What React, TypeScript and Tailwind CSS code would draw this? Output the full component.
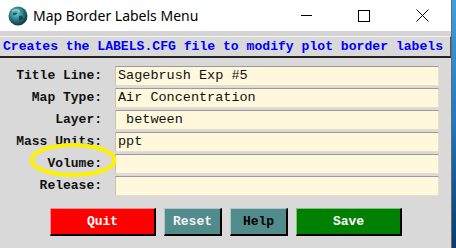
const rows: { label: string; value: string }[] = [
  { label: 'Title Line:', value: 'Sagebrush Exp #5' },
  { label: 'Map Type:', value: 'Air Concentration' },
  { label: 'Layer:', value: ' between' },
  { label: 'Mass Units:', value: 'ppt' },
  { label: 'Volume:', value: '' },
  { label: 'Release:', value: '' },
]

const mono = "font-['Courier_New','Liberation_Mono',monospace]"

function Globe() {
  return (
    <svg width="20" height="20" viewBox="0 0 20 20">
      <defs>
        <radialGradient id="g" cx="40%" cy="35%" r="70%">
          <stop offset="0%" stopColor="#6fd3d8" />
          <stop offset="60%" stopColor="#1f6f78" />
          <stop offset="100%" stopColor="#0b2e35" />
        </radialGradient>
      </defs>
      <circle cx="10" cy="10" r="9.5" fill="url(#g)" />
      <path d="M5 6 Q8 4 10 6 Q9 9 7 9 Q5 10 5 8 Z" fill="#0d3b40" opacity="0.8" />
      <path d="M11 10 Q14 9 15 12 Q13 15 11 14 Z" fill="#0d3b40" opacity="0.8" />
      <ellipse cx="8" cy="5" rx="4" ry="2" fill="#ffffff" opacity="0.35" />
    </svg>
  )
}

function Btn({ label, className }: { label: string; className: string }) {
  return (
    <button
      className={`h-[28px] border-t border-l border-b-2 border-r-2 border-b-black border-r-black text-[13px] font-bold ${mono} ${className}`}
    >
      {label}
    </button>
  )
}

export default function App() {
  return (
    <div className="relative flex w-[456px] h-[248px] overflow-hidden bg-[#d9d9d9]">
      <div className="flex flex-col w-[451px] h-full bg-[#d9d9d9]">
        <header className="flex items-center h-[31px] bg-white shrink-0">
          <div className="ml-[8px] mt-[1px]"><Globe /></div>
          <span className="ml-[5px] text-[14px] text-black font-['Noto_Sans','Liberation_Sans',sans-serif]">Map Border Labels Menu</span>
          <div className="ml-auto flex items-center h-full">
            <div className="w-[58px] flex justify-center"><div className="w-[11px] h-px bg-black" /></div>
            <div className="w-[58px] flex justify-center"><div className="w-[12px] h-[12px] border border-black" /></div>
            <div className="w-[58px] flex justify-center">
              <svg width="13" height="13" viewBox="0 0 13 13"><path d="M0.5 0.5 L12.5 12.5 M12.5 0.5 L0.5 12.5" stroke="#000" strokeWidth="1" /></svg>
            </div>
          </div>
        </header>
        <div className="h-[5px] bg-[#d4d4d4]" />
        <div className={`flex items-center h-[22px] pl-[3px] border-t border-t-[#f4f4f4] border-b-2 border-b-[#222] border-r border-r-[#555] text-[13.1px] font-bold text-[#0000ff] whitespace-pre ${mono}`}>
          Creates the LABELS.CFG file to modify plot border labels
        </div>
        <div className="flex flex-col gap-[2px] mt-[8px]">
          {rows.map((r) => (
            <div key={r.label} className="flex items-center h-[20px]">
              <div className={`w-[102px] text-right text-[13px] font-bold text-[#111] ${mono}`}>{r.label}</div>
              <div className={`ml-[13px] w-[324px] h-[20px] flex items-center pl-[2px] bg-[#fff8dc] border-t border-t-[#9a9a9a] border-l border-l-[#c9c3ae] border-b border-b-[#e6dfc6] border-r border-r-[#e6dfc6] text-[13.5px] text-[#111] whitespace-pre ${mono}`}>
                {r.value}
              </div>
            </div>
          ))}
        </div>
        <div className="flex gap-[8px] pl-[50px] mt-[12px]">
          <Btn label="Quit" className="w-[106px] bg-[#ff0000] border-t-[#ff8a8a] border-l-[#ff8a8a] text-white" />
          <Btn label="Reset" className="w-[58px] bg-[#528b8b] border-t-[#a9c5c5] border-l-[#a9c5c5] text-[#f4f4f4]" />
          <Btn label="Help" className="w-[58px] bg-[#528b8b] border-t-[#a9c5c5] border-l-[#a9c5c5] text-black" />
          <Btn label="Save" className="w-[106px] bg-[#008000] border-t-[#7fbf7f] border-l-[#7fbf7f] text-white" />
        </div>
      </div>
      <div className="flex-1 border-l border-l-[#6b6b6b] bg-gradient-to-b from-[#3ea0e0] via-[#1f78c0] to-[#0b3a6a]" />
      <svg className="absolute left-[29px] top-[143px]" width="88" height="34" viewBox="0 0 88 34">
        <ellipse cx="44" cy="17" rx="41.5" ry="15" fill="none" stroke="#fff200" strokeWidth="4" />
      </svg>
    </div>
  )
}
